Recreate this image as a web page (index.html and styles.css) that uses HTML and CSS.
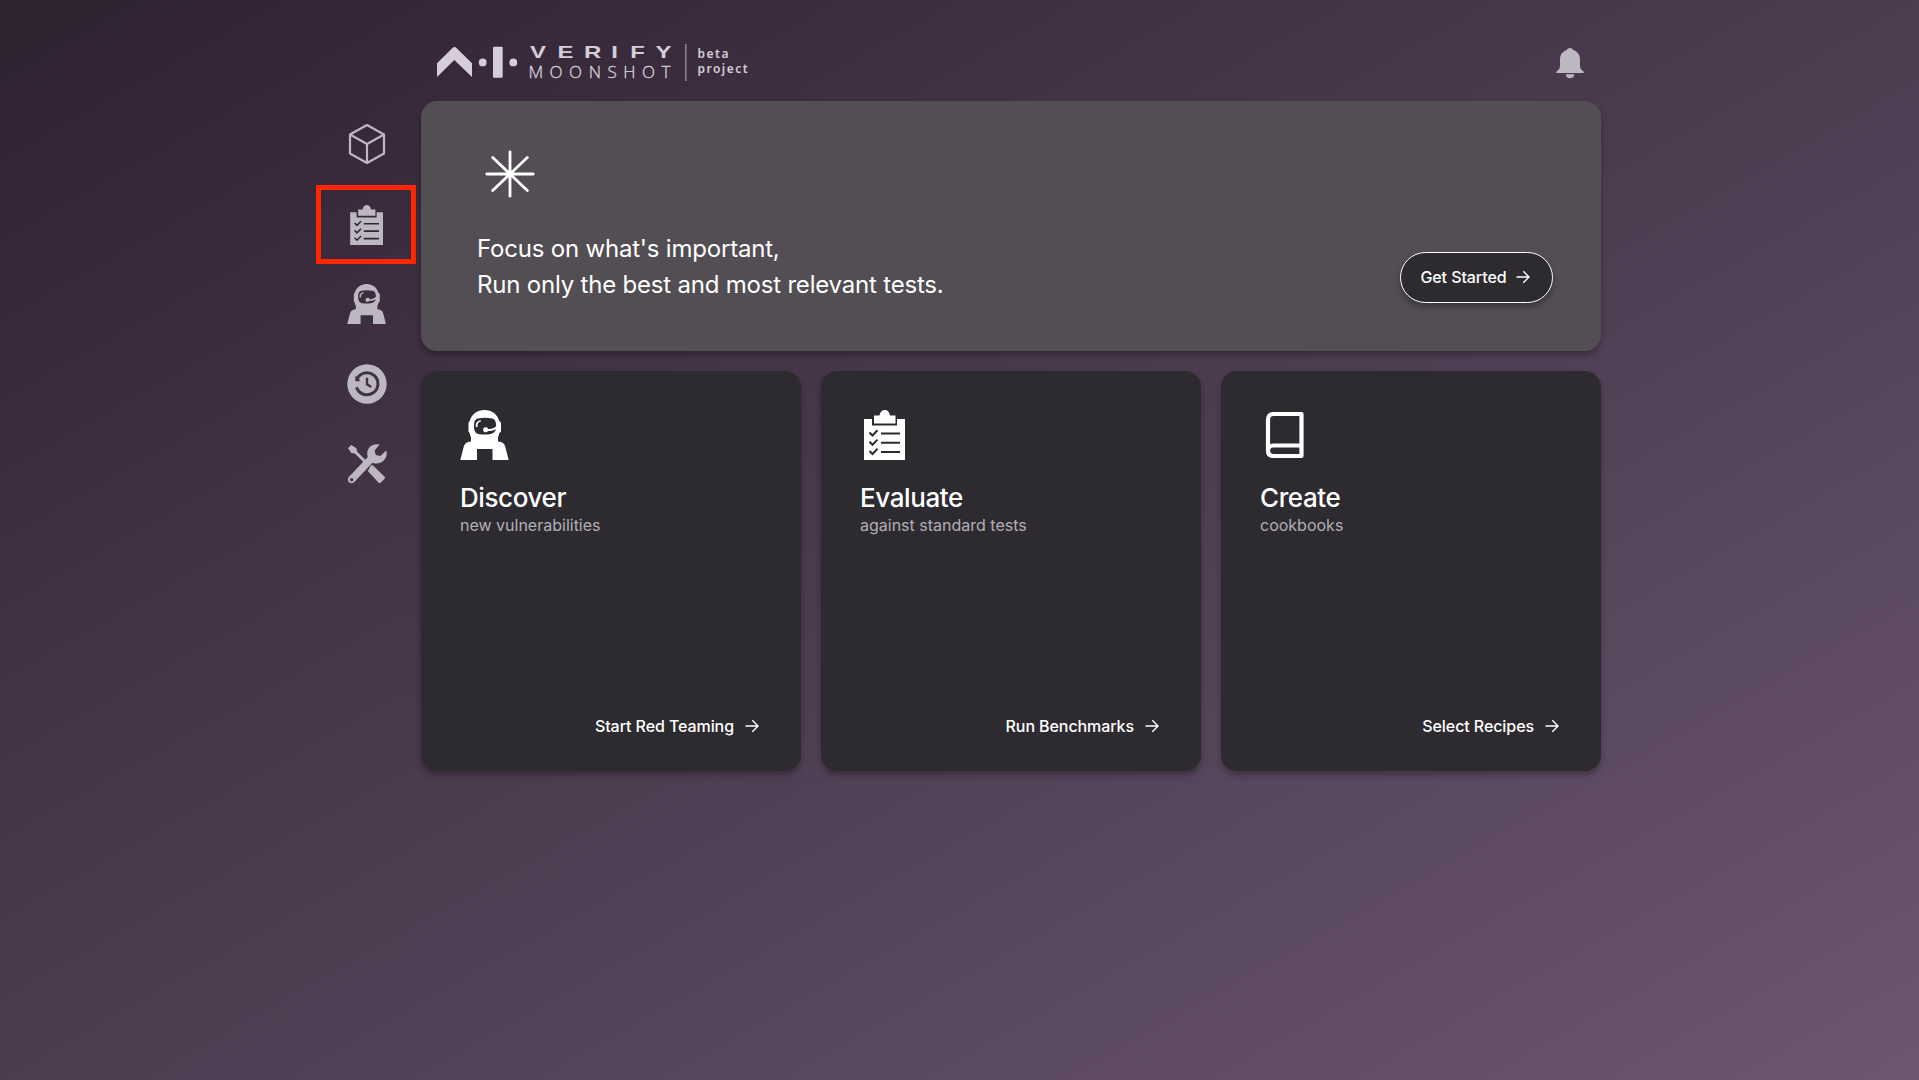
FILE: index.html
```html
<!DOCTYPE html>
<html lang="en">
<head>
<meta charset="utf-8">
<title>AI Verify Moonshot</title>
<link rel="stylesheet" href="styles.css">
</head>
<body>
<svg class="defs" width="0" height="0" aria-hidden="true">
  <defs>
    <symbol id="astronaut" viewBox="0 0 50 50">
      <path fill-rule="evenodd" d="M24.500 0C32 0 37.500 4.500 39.300 11l1.700 1.500v9l-1.700 1.800c-.300 2-.9 3-1.300 4v4.200c5 .3 6.700 2.500 7.600 6.500L48.700 50H32.500V39H17v11H.3L3.400 38c1-4 2.800-6.200 7.600-6.500v-4.200c-.5-1-1-2-1.300-4L8.500 21.500v-9L9.700 11C11.500 4.500 17 0 24.500 0zM18 8.500c-3 .7-4 3-4 7.500 0 6 2 7.800 5.500 8.200 4 .4 7 .4 10 0 4-.5 6-3 6.500-5.200-2.500 1.500-5 2.200-8 2a2.600 2.600 0 1 1 .2-2c3.500.2 6-.6 8-3-.200-4.800-1.400-6.900-4.200-7.500-4-.9-10-.9-14 0z"/>
      <path d="M15.800 17c-.4-3.500.8-6.200 4.900-6.700l.3 1.300c-2.700.3-3.600 2-3.500 5.400z"/>
    </symbol>
    <symbol id="clipboard" viewBox="0 0 50 50">
      <path fill-rule="evenodd" d="M4 9h8v6.500h25V9h8v41H4z"/>
      <path d="M14 5.500h5.500C20 2 22 0 24.800 0s4.700 2 5.200 5.500h5.500v8H14z"/>
      <g class="cut"><path d="M21 23.500h19M21 32.700h19M21 42h19"/><path d="M9.500 22.500l3 3 5-5.200M9.500 31.800l3 3 5-5.200M9.500 41l3 3 5-5.200"/></g>
    </symbol>
    <symbol id="arrow" viewBox="0 0 16 16">
      <path d="M1.500 8h12M8.300 2.200L14 8l-5.700 5.800" fill="none" stroke="currentColor" stroke-width="1.400"/>
    </symbol>
  </defs>
</svg>
<div class="page">
  <header class="header">
    <svg class="logo" width="320" height="40" viewBox="430 42 320 40" role="img" aria-label="AI Verify Moonshot">
      <path d="M437 63.300L452.500 48q2-2 4 0L472 63.300V77L454.300 60 437 77z"/>
      <circle cx="482.700" cy="62.400" r="3.900"/>
      <rect x="493" y="46.800" width="9.700" height="31" rx="1"/>
      <circle cx="513.300" cy="62.400" r="3.900"/>
      <text class="verify" transform="translate(530 58) scale(1.500 1)" x="0 18.400 36 54.200 66.800 83.600">VERIFY</text>
      <text class="moonshot" y="77.500" x="528.500 549.600 569 588.700 607.500 623.300 642 661.500">MOONSHOT</text>
      <path class="rule" d="M685.800 44v37"/>
      <text class="beta" x="697.500" y="58" textLength="31">beta</text>
      <text class="beta" x="697.500" y="72.800" textLength="50">project</text>
    </svg>
    <svg class="bell" width="28" height="31" viewBox="0 0 28 31">
      <path d="M14 0c1.700 0 2.700.8 3.200 2.100C21.600 3.500 24 7 24 11.500V18c0 2.500 1.500 4 3.500 5.500.8.700.5 1.500-.5 1.500H1c-1 0-1.300-.8-.5-1.500C2.500 22 4 20.500 4 18v-6.500C4 7 6.400 3.500 10.800 2.100 11.300.8 12.300 0 14 0zM9.800 26.200h8.400c0 2.500-1.700 4.100-4.200 4.100s-4.200-1.600-4.200-4.100z"/>
    </svg>
  </header>
  <div class="body">
    <nav class="nav">
      <a class="nav-item"><svg width="40" height="40" viewBox="0 0 40 40"><path d="M20 1L37 10.500v19L20 39 3 29.500v-19zM3 10.500L20 20l17-9.500M20 20v19" fill="none" stroke="currentColor" stroke-width="2.200" stroke-linejoin="round"/></svg></a>
      <a class="nav-item selected"><svg width="40" height="40"><use href="#clipboard"/></svg></a>
      <a class="nav-item"><svg width="40" height="40"><use href="#astronaut"/></svg></a>
      <a class="nav-item"><svg width="40" height="40" viewBox="0 0 40 40"><circle cx="20" cy="20" r="19.700"/><path class="hole" d="M9.800 15.500A11 11 0 1 1 9.500 23.300" stroke-width="3"/><path class="hole-fill" d="M8.300 11.500v5.800h5.800z"/><circle cx="20" cy="20" r="8"/><path class="hole" d="M20 13.800v6.500l4.300 2.700" stroke-width="2.400"/></svg></a>
      <a class="nav-item"><svg width="40" height="40" viewBox="0 0 40 40">
        <path d="M1 4.300L4.200 1l5.200 3.200.6 3.300 11 11-2 2L7.800 9.500 4.300 9z"/>
        <path d="M21.800 25.500l1.700-3.700 2-.8 11.900 11.500c.8.800.8 1.600 0 2.400l-3.600 3.600c-.8.800-1.600.8-2.400 0L20.800 27z"/>
        <path fill-rule="evenodd" d="M32.600.6C26.500-1.200 20.200 3 20.200 9.500c0 1.200.2 2.500.6 3.600L1.800 33c-3 3.700 1.600 8.300 5.300 5.200L25.500 18.700C32 21.500 39.500 17 39.700 9.800c0-1.400-.2-2.300-.6-3.300L33.400 12l-4.600-1-1.200-4.600zM4.700 34a1.700 1.700 0 1 1 0 3.400 1.700 1.700 0 0 1 0-3.400z"/></svg></a>
    </nav>
    <main class="main">
      <section class="hero">
        <div class="hero-copy">
          <svg class="star" width="50" height="48" viewBox="0 0 50 48"><path d="M25 1.800v44.400M1.800 24h46.400M7.700 7.400l34.600 33.200M42.300 7.400L7.700 40.600"/></svg>
          <p class="tagline">Focus on what's important,<br>Run only the best and most relevant tests.</p>
        </div>
        <button class="start">Get Started<svg width="16" height="16"><use href="#arrow"/></svg></button>
      </section>
      <section class="cards">
        <article class="card">
          <svg width="50" height="50"><use href="#astronaut"/></svg>
          <h2>Discover</h2><p>new vulnerabilities</p>
          <a class="action">Start Red Teaming<svg width="16" height="16"><use href="#arrow"/></svg></a>
        </article>
        <article class="card">
          <svg width="50" height="50"><use href="#clipboard"/></svg>
          <h2>Evaluate</h2><p>against standard tests</p>
          <a class="action">Run Benchmarks<svg width="16" height="16"><use href="#arrow"/></svg></a>
        </article>
        <article class="card">
          <svg width="50" height="50" viewBox="0 0 50 50"><path d="M41.500 4H13.500Q8 4 8 9.500v31Q8 46 13.500 46h28zM8 40.500Q8 35.500 13.500 35.500h28" fill="none" stroke="currentColor" stroke-width="4.200" stroke-linejoin="round"/></svg>
          <h2>Create</h2><p>cookbooks</p>
          <a class="action">Select Recipes<svg width="16" height="16"><use href="#arrow"/></svg></a>
        </article>
      </section>
    </main>
  </div>
</div>
</body>
</html>
```
FILE: styles.css
```css
* { box-sizing: border-box; }
body {
  margin: 0;
  min-height: 100vh;
  font-family: Inter, "Liberation Sans", sans-serif;
  color: #fff;
  background: linear-gradient(to bottom right, #2e2130, #6b5770);
}
svg { display: block; fill: currentColor; flex: none; }
.defs { position: absolute; }
.page { width: 1285px; margin-left: 316px; }
.header {
  height: 101px;
  padding: 42px 17px 0 114px;
  display: flex;
  justify-content: space-between;
  color: #bdb7c1;
}
.logo { color: #d5ceda; }
.bell { margin-top: 6px; }
.verify { font: bold 16px "Liberation Sans", sans-serif; }
.moonshot { font: 300 17px "Open Sans", sans-serif; stroke: currentColor; stroke-width: .35; }
.beta { font: 600 12px "Noto Sans", sans-serif; }
.rule { stroke: #8f8596; stroke-width: 1.500; }
.body { display: flex; gap: 5px; }
.nav {
  width: 100px;
  padding-top: 3px;
  display: flex;
  flex-direction: column;
  color: #bdb7c1;
}
.nav-item { height: 80px; display: flex; align-items: center; justify-content: center; padding-left: 2px; }
.nav-item.selected { height: 79px; margin-top: 1px; outline: 5px solid #ff2600; outline-offset: -5px; }
.cut { fill: none; stroke: #2e2b30; stroke-width: 2; }
.nav .cut { stroke: #3b2e3f; }
.hole { fill: none; stroke: #403244; }
.hole-fill { fill: #403244; }
.main { width: 1180px; display: flex; flex-direction: column; gap: 20px; }
.hero {
  height: 250px;
  padding: 49px 48px 48px 56px;
  border-radius: 16px;
  background: #524e54;
  box-shadow: 0 4px 6px rgba(0, 0, 0, .3);
  display: flex;
  justify-content: space-between;
  align-items: flex-end;
}
.hero-copy { align-self: flex-start; }
.star { margin-left: 8px; fill: none; stroke: #fff; stroke-width: 2.800; stroke-linecap: round; }
.tagline { margin: 33px 0 0; font-size: 24px; line-height: 36px; letter-spacing: -.2px; }
.start {
  width: 153px;
  height: 51px;
  padding: 0 2px 1px 0;
  border: 1px solid #fff;
  border-radius: 26px;
  background: #2e2b30;
  color: #fff;
  font: 500 16px Inter, sans-serif;
  letter-spacing: -.08px;
  box-shadow: 0 4px 6px rgba(0, 0, 0, .3);
  display: flex;
  align-items: center;
  justify-content: center;
  gap: 8px;
}
.cards { display: grid; grid-template-columns: repeat(3, 1fr); gap: 20px; }
.card {
  height: 400px;
  padding: 39px 41px 33px 39px;
  border-radius: 16px;
  background: #2e2b30;
  box-shadow: 0 4px 6px rgba(0, 0, 0, .3);
  display: flex;
  flex-direction: column;
}
.card h2 { margin: 20px 0 0; font-size: 26px; line-height: 36px; font-weight: 500; letter-spacing: -.4px; }
.card p { margin: -3px 0 0; font-size: 16px; line-height: 24px; color: #b3aeb6; }
.action { margin-top: auto; align-self: flex-end; display: flex; align-items: center; gap: 10px; font-size: 16px; line-height: 24px; font-weight: 500; letter-spacing: -.08px; }
```
